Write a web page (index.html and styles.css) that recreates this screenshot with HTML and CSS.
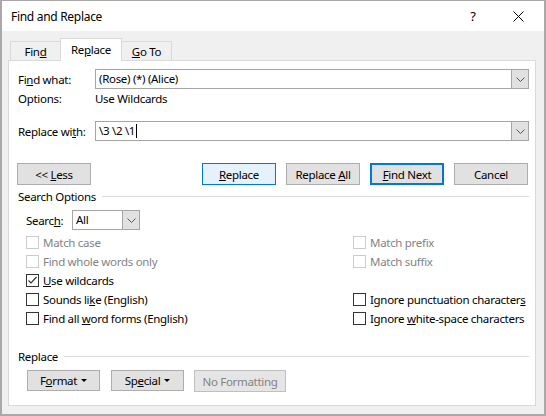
FILE: index.html
```html
<!DOCTYPE html>
<html>
<head lang="en">
    <meta charset="UTF-8">
    <title>Find and Replace</title>
    <link rel="stylesheet" href="styles.css">
</head>
<body>
<div class="window">
    <div class="titlebar">
        <span class="title">Find and Replace</span>
        <span class="help">?</span>
        <span class="close">
            <svg width="11" height="11" viewBox="0 0 11 11"><path d="M0.5 0.5 L10.5 10.5 M10.5 0.5 L0.5 10.5" stroke="#000" stroke-width="1" fill="none"/></svg>
        </span>
    </div>
    <div class="main">
        <div class="tabs">
            <div class="tab"><span>Fin<u>d</u></span></div>
            <div class="tab active"><span>Re<u>p</u>lace</span></div>
            <div class="tab"><span><u>G</u>o To</span></div>
        </div>
        <div class="panel">
            <div class="field-row">
                <span class="field-label">Fi<u>n</u>d what:</span>
                <div class="combo">
                    <span class="combo-text">(Rose) (*) (Alice)</span>
                    <span class="combo-btn"><svg width="9" height="5" viewBox="0 0 9 5"><path d="M0.5 0.5 L4.5 4.5 L8.5 0.5" stroke="#555" stroke-width="1" fill="none"/></svg></span>
                </div>
            </div>
            <div class="options-row">
                <span class="field-label">Options:</span>
                <span>Use Wildcards</span>
            </div>
            <div class="field-row replace-row">
                <span class="field-label">Replace wi<u>t</u>h:</span>
                <div class="combo">
                    <span class="combo-text"><span>\3 \2 \1</span><span class="caret"></span></span>
                    <span class="combo-btn"><svg width="9" height="5" viewBox="0 0 9 5"><path d="M0.5 0.5 L4.5 4.5 L8.5 0.5" stroke="#555" stroke-width="1" fill="none"/></svg></span>
                </div>
            </div>
            <div class="button-row">
                <span class="btn less"><span>&lt;&lt; <u>L</u>ess</span></span>
                <span class="btn default"><span><u>R</u>eplace</span></span>
                <span class="btn"><span>Replace <u>A</u>ll</span></span>
                <span class="btn focus"><span><u>F</u>ind Next</span></span>
                <span class="btn"><span>Cancel</span></span>
            </div>
            <div class="group-head">
                <span>Search Options</span>
                <span class="group-line"></span>
            </div>
            <div class="search-row">
                <span class="search-label">Searc<u>h</u>:</span>
                <div class="select">
                    <span class="combo-text">All</span>
                    <span class="combo-btn"><svg width="9" height="5" viewBox="0 0 9 5"><path d="M0.5 0.5 L4.5 4.5 L8.5 0.5" stroke="#555" stroke-width="1" fill="none"/></svg></span>
                </div>
            </div>
            <div class="checks">
                <label class="check disabled"><span class="box"></span><span>Match case</span></label>
                <label class="check disabled"><span class="box"></span><span>Match prefix</span></label>
                <label class="check disabled"><span class="box"></span><span>Find whole words only</span></label>
                <label class="check disabled"><span class="box"></span><span>Match suffix</span></label>
                <label class="check"><span class="box"><svg width="11" height="11" viewBox="0 0 11 11"><path d="M1.5 5.5 L4 8 L9.5 2" stroke="#333" stroke-width="1.2" fill="none"/></svg></span><span><u>U</u>se wildcards</span></label>
                <span></span>
                <label class="check"><span class="box"></span><span>Sounds li<u>k</u>e (English)</span></label>
                <label class="check"><span class="box"></span><span>Ignore punctuation character<u>s</u></span></label>
                <label class="check"><span class="box"></span><span>Find all <u>w</u>ord forms (English)</span></label>
                <label class="check"><span class="box"></span><span>Ignore <u>w</u>hite-space characters</span></label>
            </div>
            <div class="group-head replace-head">
                <span>Replace</span>
                <span class="group-line"></span>
            </div>
            <div class="bottom-row">
                <span class="btn small"><span>F<u>o</u>rmat</span><i class="tri"></i></span>
                <span class="btn small"><span>Sp<u>e</u>cial</span><i class="tri"></i></span>
                <span class="btn wide disabled-btn"><span>No Formatting</span></span>
            </div>
        </div>
    </div>
</div>
</body>
</html>
```

FILE: styles.css
```css
* {
    margin: 0;
    padding: 0;
    box-sizing: border-box;
}
body {
    font-family: "Noto Sans", "Segoe UI", sans-serif;
    font-size: 11.5px;
    letter-spacing: -0.3px;
    color: #000;
    background: #fff;
}
u {
    text-decoration: underline;
}
.window {
    width: 546px;
    height: 416px;
    border: 2px solid #a9a9a9;
    border-top: 1px solid #a9a9a9;
    background: #f0f0f0;
    display: flex;
    flex-direction: column;
    white-space: nowrap;
}
.titlebar {
    height: 30px;
    background: #fff;
    display: flex;
    align-items: center;
    padding-left: 9px;
    padding-right: 3px;
}
.title {
    flex: 1;
    font-size: 12px;
}
.help {
    width: 44px;
    text-align: center;
    font-size: 13px;
}
.close {
    width: 46px;
    height: 30px;
    display: flex;
    align-items: center;
    justify-content: center;
}
.main {
    flex: 1;
    padding: 7px 8px 8px 6px;
    display: flex;
    flex-direction: column;
}
.tabs {
    display: flex;
    align-items: flex-end;
    height: 23px;
    padding-left: 2px;
    margin-bottom: -1px;
}
.tab {
    width: 51px;
    height: 20px;
    border: 1px solid #d9d9d9;
    border-bottom: none;
    background: #f0f0f0;
    display: flex;
    align-items: center;
    justify-content: center;
}
.tab + .tab {
    margin-left: -1px;
}
.tab.active {
    width: 62px;
    height: 23px;
    padding-bottom: 2px;
    background: #fff;
    position: relative;
    z-index: 1;
}
.panel {
    flex: 1;
    background: #fff;
    border: 1px solid #d9d9d9;
    padding: 8px 6px 0 9px;
}
.field-row {
    display: flex;
    align-items: center;
    height: 20px;
}
.field-label {
    width: 77px;
}
.combo, .select {
    flex: 1;
    height: 20px;
    border: 1px solid #a5a5a5;
    display: flex;
}
.combo-text {
    flex: 1;
    padding-left: 3px;
    line-height: 18px;
    display: flex;
    align-items: center;
}
.caret {
    width: 1px;
    height: 14px;
    background: #000;
    margin-left: 1px;
}
.combo-btn {
    width: 17px;
    background: #e1e1e1;
    border-left: 1px solid #a5a5a5;
    display: flex;
    align-items: center;
    justify-content: center;
}
.options-row {
    display: flex;
    align-items: center;
    height: 18px;
}
.replace-row {
    margin-top: 14px;
}
.button-row {
    display: flex;
    gap: 10px;
    height: 22px;
    margin: 22px 1px 0 -1px;
}
.btn {
    width: 74px;
    height: 22px;
    border: 1px solid #adadad;
    background: #e1e1e1;
    display: flex;
    align-items: center;
    justify-content: center;
}
.btn.less {
    margin-right: auto;
}
.btn.default {
    background: #e5f1fb;
    border-color: #0078d7;
}
.btn.focus {
    border: 2px solid #0078d7;
}
.group-head {
    display: flex;
    align-items: center;
    gap: 6px;
    height: 18px;
    margin-top: 2px;
}
.group-line {
    flex: 1;
    border-top: 1px solid #dcdcdc;
}
.search-row {
    display: flex;
    align-items: center;
    height: 20px;
    margin-top: 5px;
    padding-left: 8px;
}
.search-label {
    width: 46px;
}
.select {
    flex: none;
    width: 68px;
}
.checks {
    display: grid;
    grid-template-columns: 327px 1fr;
    grid-auto-rows: 19px;
    margin-top: 3px;
    padding-left: 8px;
}
.check {
    display: flex;
    align-items: center;
    gap: 4px;
}
.box {
    width: 13px;
    height: 13px;
    border: 1px solid #333;
    background: #fff;
    display: flex;
    align-items: center;
    justify-content: center;
}
.check.disabled {
    color: #838383;
}
.check.disabled .box {
    border-color: #cccccc;
}
.replace-head {
    margin-top: 19px;
}
.bottom-row {
    display: flex;
    gap: 10px;
    margin-top: 5px;
    padding-left: 9px;
}
.btn.small {
    width: 73px;
    height: 21px;
}
.btn.small + .btn.small {
    margin-left: 1px;
}
.btn.wide {
    width: 92px;
}
.btn.disabled-btn {
    background: #e5e5e5;
    border-color: #bfbfbf;
    color: #838383;
}
.tri {
    width: 0;
    height: 0;
    border-left: 3px solid transparent;
    border-right: 3px solid transparent;
    border-top: 3px solid #000;
    margin-left: 4px;
}
```
